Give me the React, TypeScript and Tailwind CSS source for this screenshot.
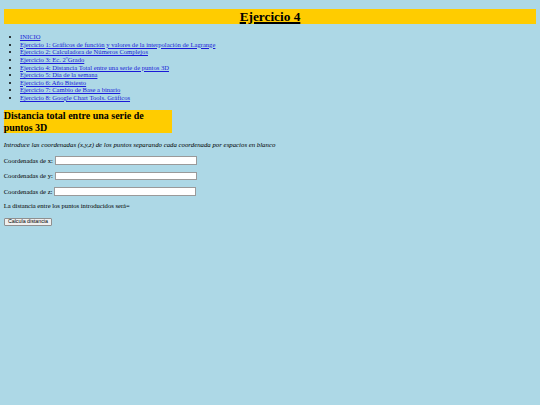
const ejercicios = [
    'INICIO',
    'Ejercicio 1: Gráficos de función y valores de la interpolación de Lagrange',
    'Ejercicio 2: Calculadora de Números Complejos',
    'Ejercicio 3: Ec. 2ºGrado',
    'Ejercicio 4: Distancia Total entre una serie de puntos 3D',
    'Ejercicio 5: Día de la semana',
    'Ejercicio 6: Año Bisiesto',
    'Ejercicio 7: Cambio de Base a binario',
    'Ejercicio 8: Google Chart Tools. Gráficos',
];

const ejes = ['x', 'y', 'z'];

export default function App() {
    return (
        <div className="min-h-[405px] bg-[#add8e6] px-[3.7px] pt-[8.7px] font-['Liberation_Serif',serif] text-[6.6px] leading-[7.6px] text-black">
            <h1 className="bg-[#ffcc00] text-center text-[13.3px] leading-[15.3px] font-bold underline decoration-[1.5px]">Ejercicio 4</h1>

            <ul className="mt-[9.2px] list-disc pl-[16.3px]">
                {ejercicios.map((item) => (
                    <li key={item}>
                        <a
                            href="#"
                            className="text-[#1a1ad8] underline"
                        >
                            {item}
                        </a>
                    </li>
                ))}
            </ul>

            <h2 className="mt-[8.4px] w-[168.5px] bg-[#ffcc00] text-[10px] leading-[11.6px] font-bold">Distancia total entre una serie de puntos 3D</h2>

            <p className="mt-[8px] text-[6.8px] italic">Introduce las coordenadas (x,y,z) de los puntos separando cada coordenada por espacios en blanco</p>

            <div className="mt-[7.5px] flex flex-col gap-[7px]">
                {ejes.map((eje) => (
                    <label
                        key={eje}
                        className="flex h-[8.5px] items-center gap-[1.8px]"
                    >
                        <span>Coordenadas de {eje}:</span>
                        <input
                            type="text"
                            className="h-[8.4px] w-[142px] border border-[#9a9a9a] bg-white"
                        />
                    </label>
                ))}
            </div>

            <p className="mt-[6px]">La distancia entre los puntos introducidos será=</p>

            <button className="mt-[8.5px] h-[8px] w-[48.5px] rounded-[1px] border border-[#8f8f8f] bg-[#efefef] font-['Liberation_Sans',sans-serif] text-[5.3px] leading-none">
                Calcula distancia
            </button>
        </div>
    );
}
